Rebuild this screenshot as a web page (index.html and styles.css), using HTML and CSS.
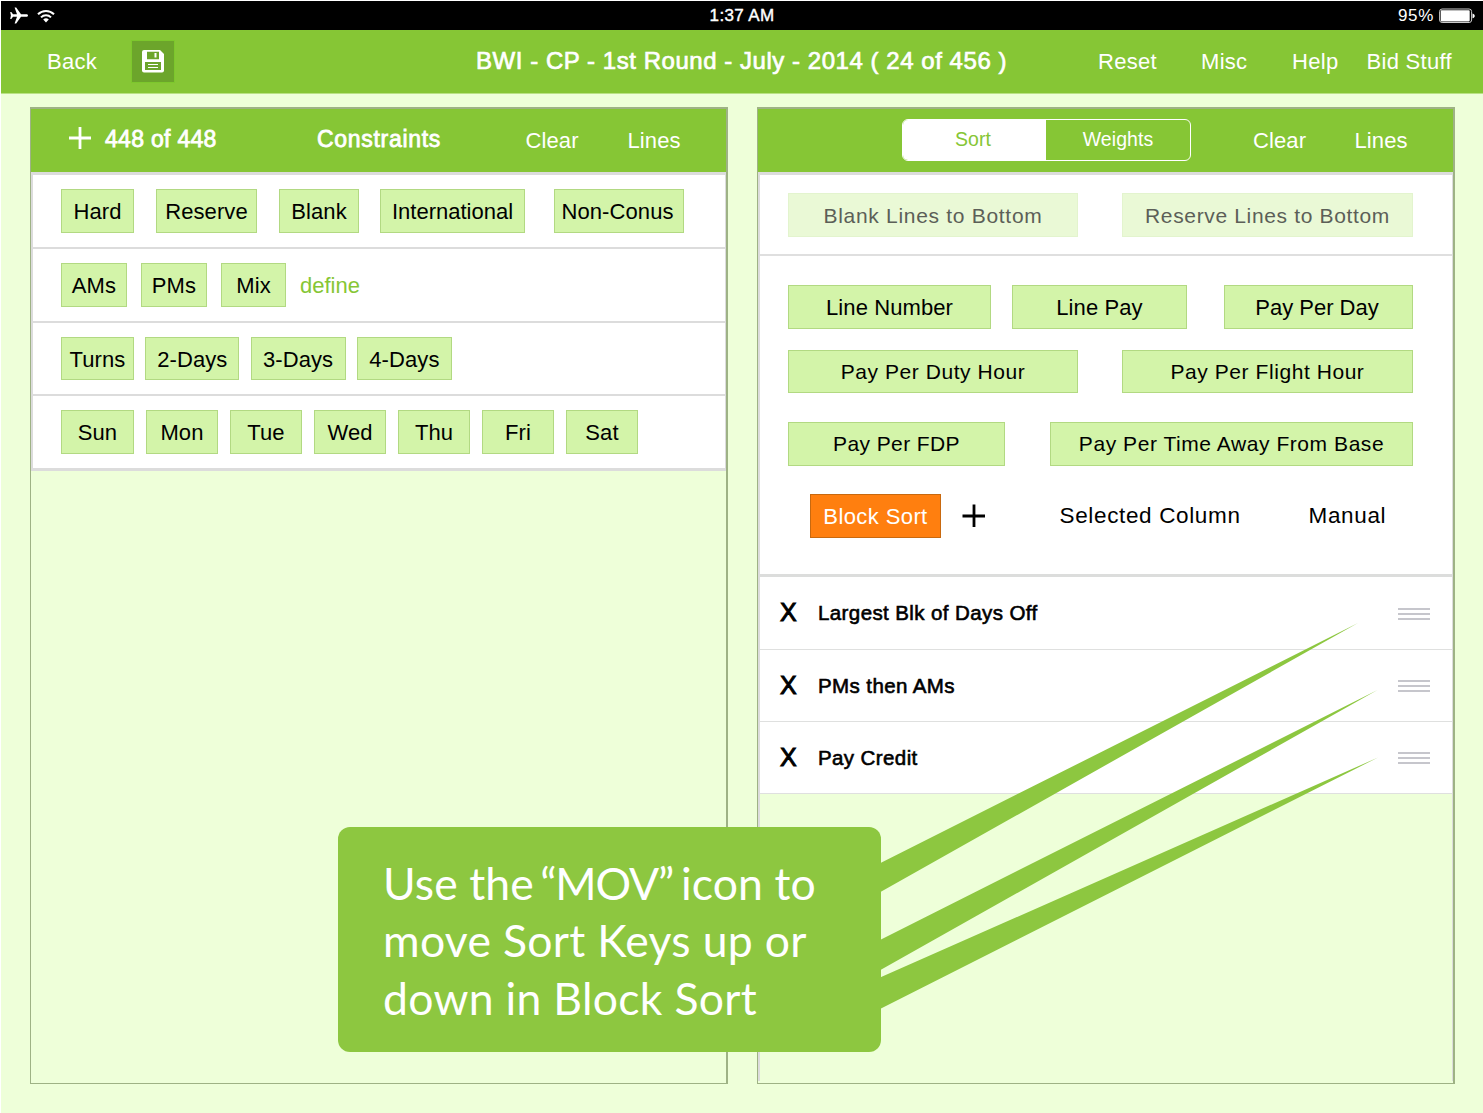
FILE: index.html
```html
<!DOCTYPE html>
<html lang="en">
<head>
<meta charset="utf-8">
<title>BWI - CP - 1st Round</title>
<link rel="stylesheet" href="styles.css">
</head>
<body>
<div class="app">
  <header class="status">
    <div class="status-left">
      <svg width="18" height="17" viewBox="0 0 18 17"><path fill="#fff" d="M18 8.500c0-.8-.8-1.300-1.700-1.300H11L6.200.4H4.600L7 7.200H3L1.300 5H.2l.7 3.500-.7 3.500h1.100L3 9.800h4L4.600 16.600h1.600L11 9.800h5.300c.9 0 1.700-.5 1.700-1.300z"/></svg>
      <svg width="18" height="14" viewBox="0 0 18 14"><g fill="none" stroke="#fff" stroke-width="2"><path d="M1 5.200a11.300 11.300 0 0 1 16 0"/><path d="M4 8.400a7 7 0 0 1 10 0"/></g><path fill="#fff" d="M6.200 10.600a4 4 0 0 1 5.600 0L9 13.500z"/></svg>
    </div>
    <div class="clock">1:37 AM</div>
    <div class="status-right">
      <span class="percent">95%</span>
      <svg width="37" height="16" viewBox="0 0 37 16"><rect x=".6" y="1" width="32" height="13.500" rx="2.500" fill="none" stroke="#ccc"/><rect x="1.700" y="2.200" width="29" height="11.200" rx=".8" fill="#fff"/><path fill="#fff" d="M33.500 5.500c3 .8 3 4 0 4.800z"/></svg>
    </div>
  </header>

  <nav class="toolbar">
    <a class="link">Back</a>
    <a class="save">
      <svg width="22" height="23" viewBox="0 0 22 23"><path fill="#fff" d="M2 0h16l4 4v16.500a2 2 0 0 1-2 2H2a2 2 0 0 1-2-2V2a2 2 0 0 1 2-2z"/><path fill="#6ca52b" d="M5 1.800h12v7.400H5zM3 12h16v8H3z"/><path fill="#fff" d="M12.500 3h2v4.500h-2zM6 14h10v1H6zM6 17h10v1H6z"/></svg>
    </a>
    <h1 class="title">BWI - CP - 1st Round - July - 2014 ( 24 of 456 )</h1>
    <a class="link">Reset</a>
    <a class="link">Misc</a>
    <a class="link">Help</a>
    <a class="link">Bid Stuff</a>
  </nav>

  <main class="panels">
    <section class="panel panel-constraints">
      <div class="panel-head head-constraints">
        <svg class="plus" width="22" height="22" viewBox="0 0 22 22"><path d="M11 0v22M0 11h22" stroke="#fff" stroke-width="2.800"/></svg>
        <span class="strong count">448 of 448</span>
        <span class="strong heading">Constraints</span>
        <a class="link">Clear</a>
        <a class="link">Lines</a>
      </div>
      <div class="rows">
        <div class="row filters-type"><b class="key">Hard</b><b class="key">Reserve</b><b class="key">Blank</b><b class="key intl">International</b><b class="key conus">Non-Conus</b></div>
        <div class="row filters-time"><b class="key">AMs</b><b class="key">PMs</b><b class="key">Mix</b><a class="define">define</a></div>
        <div class="row filters-length"><b class="key">Turns</b><b class="key">2-Days</b><b class="key">3-Days</b><b class="key">4-Days</b></div>
        <div class="row filters-day"><b class="key">Sun</b><b class="key">Mon</b><b class="key">Tue</b><b class="key">Wed</b><b class="key">Thu</b><b class="key">Fri</b><b class="key">Sat</b></div>
      </div>
    </section>

    <section class="panel panel-sort">
      <div class="panel-head head-sort">
        <div class="segments"><span class="segment active">Sort</span><span class="segment">Weights</span></div>
        <a class="link">Clear</a>
        <a class="link">Lines</a>
      </div>
      <div class="sort-body">
        <div class="bottoms">
          <b class="key faded blank-bottom">Blank Lines to Bottom</b><b class="key faded reserve-bottom">Reserve Lines to Bottom</b>
        </div>
        <div class="sort-keys">
          <div class="keys keys-line"><b class="key">Line Number</b><b class="key">Line Pay</b><b class="key day-pay">Pay Per Day</b></div>
          <div class="keys keys-hour"><b class="key wide">Pay Per Duty Hour</b><b class="key wide">Pay Per Flight Hour</b></div>
          <div class="keys keys-base"><b class="key fdp">Pay Per FDP</b><b class="key wide">Pay Per Time Away From Base</b></div>
          <div class="keys keys-block">
            <b class="key selected">Block Sort</b>
            <svg class="plus" width="24" height="24" viewBox="0 0 24 24"><path d="M12 .5v22.500M.5 12h22.500" stroke="#000" stroke-width="2.800"/></svg>
            <span class="plain">Selected Column</span>
            <span class="plain">Manual</span>
          </div>
        </div>
        <div class="sort-list">
          <div class="sort-item"><span class="remove">X</span><span class="name largest">Largest Blk of Days Off</span><span class="grip"><i></i><i></i><i></i></span></div>
          <div class="sort-item"><span class="remove">X</span><span class="name">PMs then AMs</span><span class="grip"><i></i><i></i><i></i></span></div>
          <div class="sort-item"><span class="remove">X</span><span class="name">Pay Credit</span><span class="grip"><i></i><i></i><i></i></span></div>
        </div>
      </div>
    </section>
  </main>

  <svg class="pointers" width="1483" height="1113" viewBox="0 0 1483 1113"><path fill="#8dc740" d="M880 863.200L1358 623 880 892.300zM880 939.900L1377.500 690 880 970.300zM880 977.500L1378 757.500 880 1008.900z"/></svg>
  <aside class="callout">
    <div class="line line-a">Use the <span class="quoted">“MOV”</span> icon to</div>
    <div class="line line-b">move Sort Keys up or</div>
    <div class="line line-c">down in Block Sort</div>
  </aside>
</div>
</body>
</html>
```
FILE: styles.css
```css
* { box-sizing: border-box; }

body {
  margin: 0;
  background: #fff;
  font-family: "Liberation Sans", Arial, sans-serif;
  font-size: 22px;
  color: #000;
}

.app {
  position: relative;
  width: 1483px;
  height: 1113px;
  padding: 1px 0 0 1px;
  overflow: hidden;
  white-space: nowrap;
}

svg { display: block; }

/* Status bar */
.status {
  display: grid;
  grid-template-columns: 1fr 70px 1fr;
  align-items: center;
  height: 29px;
  padding: 0 9px 0 9px;
  background: #000;
  color: #fff;
  font-size: 17px;
}
.status-left { display: flex; align-items: center; gap: 9px; }
.clock { text-align: center; letter-spacing: .35px; -webkit-text-stroke: .4px #fff; }
.status-right { display: flex; justify-content: flex-end; align-items: center; gap: 5px; margin-right: -2px; }
.percent { letter-spacing: .7px; }

/* Toolbar */
.toolbar {
  display: grid;
  grid-template-columns: 84px 345px 622px 103px 91px 74.500px 1fr;
  height: 64px;
  padding-left: 46px;
  background: #86c635;
  border-bottom: 1px solid #b9e284;
  color: #fff;
  line-height: 64px;
}
.link { color: #fff; letter-spacing: .3px; }
.save {
  display: flex;
  align-items: center;
  justify-content: center;
  width: 44px;
  height: 43px;
  margin-top: 10px;
  background: #6ca52b;
  border: 1px solid #7dc82c;
}
.title {
  margin: 0;
  font-size: 24px;
  font-weight: normal;
  letter-spacing: .54px;
  line-height: 61px;
  -webkit-text-stroke: .7px #fff;
}

/* Panels */
.panels {
  display: grid;
  grid-template-columns: 698px 698px;
  gap: 29px;
  height: 1019px;
  padding: 13px 0 29px 29px;
  background: #eeffd9;
}
.panel { border: 1px solid #9eb285; border-width: 2px 2px 1px 1px; }
.panel-head {
  display: grid;
  height: 63px;
  background: #86c635;
  color: #fff;
  line-height: 64px;
}
.panel-head .link { letter-spacing: .1px; }
.head-constraints { grid-template-columns: 36px 212px 208.500px 102px 1fr; padding-left: 38px; }
.head-sort { grid-template-columns: 351px 101.500px 1fr; padding-left: 144px; }
.panel-head .plus { margin-top: 18px; }
.strong { font-size: 23px; line-height: 61px; -webkit-text-stroke: .8px #fff; }
.count { letter-spacing: .3px; }
.heading { letter-spacing: .7px; }

.segments {
  display: grid;
  grid-template-columns: 143px 1fr;
  width: 289px;
  height: 42px;
  margin-top: 10px;
  border: 1.500px solid #fff;
  border-radius: 6px;
  font-size: 19.500px;
  line-height: 38px;
  letter-spacing: .05px;
  text-align: center;
  overflow: hidden;
}
.segment.active { background: #fff; color: #86c635; padding-right: 3px; }

/* Constraint rows */
.rows {
  background: #fff;
  border: 3px solid #dcdcdc;
  border-width: 3px 1px 3px 2px;
}
.row {
  display: grid;
  align-items: start;
  height: 74px;
  padding: 14px 0 0 28px;
  border-bottom: 2px solid #dcdcdc;
}
.filters-type { grid-template-columns: 73px 101px 80px 145px 130px; column-gap: 22px; }
.key.intl { margin: 0 1px 0 -1px; letter-spacing: 0; }
.conus { margin-left: 6px; margin-right: -6px; padding-right: 3px; }
.filters-time { grid-template-columns: 66px 66px 65px 70px; column-gap: 14px; }
.filters-length { grid-template-columns: 73px 94px 95px 95px; column-gap: 11.300px; height: 73px; }
.filters-day { grid-template-columns: 73px repeat(6, 72px); column-gap: 12px; height: 72px; border-bottom: 0; }

.key {
  height: 44px;
  background: #d3f4a9;
  border: 1px solid #b2d982;
  font-weight: normal;
  line-height: 43px;
  letter-spacing: .1px;
  text-align: center;
}
.filters-length .key { height: 43px; }
.define { color: #86c635; line-height: 46px; }

/* Sort panel */
.sort-body { border: 2px solid #dcdcdc; border-width: 3px 1px 0 2px; height: 909px; }
.bottoms {
  display: grid;
  grid-template-columns: 290px 291px;
  column-gap: 44px;
  height: 81px;
  padding: 18px 0 0 28px;
  background: #fff;
  border-bottom: 2px solid #dfdfdf;
}
.faded {
  background: #eaf9d6;
  border-color: #e3f4ce;
  color: #5c5f58;
  font-size: 21px;
  line-height: 44px;
}
.blank-bottom { letter-spacing: .7px; }
.reserve-bottom { letter-spacing: .65px; }

.sort-keys {
  height: 321px;
  padding: 29px 0 0 28px;
  background: #fff;
  border-bottom: 3px solid #dcdddc;
}
.keys { display: grid; }
.keys-line { grid-template-columns: 203px 175px 189px; height: 65px; justify-content: start; }
.keys-line .key:nth-child(2) { margin: 0 -21px 0 21px; }
.keys-line .key:nth-child(3) { margin: 0 -58px 0 58px; padding-right: 3px; letter-spacing: 0; }
.keys-hour { grid-template-columns: 290px 291px; column-gap: 44px; height: 72px; font-size: 21px; }
.keys-hour .key { height: 43px; line-height: 41px; }
.keys-base { grid-template-columns: 217px 363px; column-gap: 45px; height: 72px; font-size: 21px; }
.keys-base .key { line-height: 41px; }
.wide { letter-spacing: .56px; }
.fdp { letter-spacing: .4px; }
.keys-block {
  grid-template-columns: 131px 97px 249px 1fr;
  padding-left: 22px;
}
.selected { background: #ff7f0f; border-color: #c8690f; color: #fff; letter-spacing: .4px; line-height: 44px; }
.keys-block .plus { margin: 10px 0 0 21px; }
.plain { font-size: 22.500px; line-height: 44px; letter-spacing: .65px; margin-left: 21.500px; }

.sort-item {
  display: grid;
  grid-template-columns: 38px 580px 32px;
  height: 72px;
  padding-left: 20px;
  background: #fff;
  border-bottom: 1px solid #dfe0df;
  line-height: 71px;
}
.sort-item:first-child { height: 73px; line-height: 72px; }
.remove { font-size: 25px; line-height: 70px; -webkit-text-stroke: 1px #000; }
.name { font-size: 20.500px; letter-spacing: .4px; -webkit-text-stroke: .6px #000; }
.grip { display: grid; gap: 3px; align-content: start; padding-top: 30px; }
.sort-item:first-child .grip { padding-top: 31px; }
.grip i { height: 2px; background: #c6c6cc; }

/* Instruction callout over the panels */
.pointers { position: absolute; left: 0; top: 0; }
.callout {
  position: absolute;
  left: 338px;
  top: 827px;
  width: 543px;
  height: 225px;
  padding: 26.500px 0 0 45px;
  background: #8dc740;
  border-radius: 12px;
  color: #fff;
  font-family: Lato, "Open Sans", sans-serif;
  font-size: 44.500px;
  line-height: 57.500px;
  letter-spacing: .3px;
}
.line-a { letter-spacing: .1px; }
.quoted { margin: 0 -3.500px 0 -5px; letter-spacing: -1.200px; }
```
